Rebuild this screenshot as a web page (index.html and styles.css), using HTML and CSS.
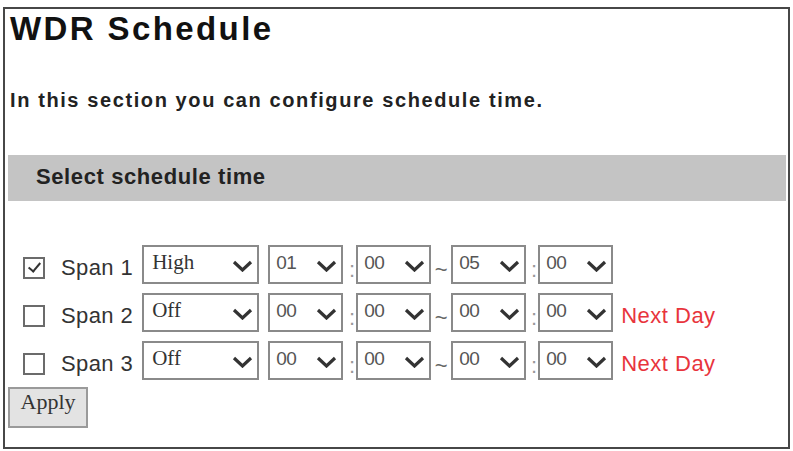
FILE: index.html
```html
<!DOCTYPE html>
<html lang="en">
<head>
  <meta charset="UTF-8">
  <meta name="viewport" content="width=793, initial-scale=1.0">
  <title>WDR Schedule</title>
  <link rel="stylesheet" href="styles.css">
</head>
<body>
  <div class="frame">
    <h1>WDR Schedule</h1>
    <p class="intro">In this section you can configure schedule time.</p>
    <div class="bar">Select schedule time</div>
    <form class="spans" autocomplete="off">
      <div class="span-row">
        <input type="checkbox" checked>
        <span class="span-name">Span 1</span>
        <span class="pick mode">
          <select><option>High</option><option>Low</option><option>Off</option></select>
          <svg class="chev" viewBox="0 0 21 12"><path d="M2 2l8.5 8 8.5-8"/></svg>
        </span>
        <span class="pick clock">
          <select><option>01</option></select>
          <svg class="chev" viewBox="0 0 21 12"><path d="M2 2l8.5 8 8.5-8"/></svg>
        </span>
        <span class="sep">:</span>
        <span class="pick clock">
          <select><option>00</option></select>
          <svg class="chev" viewBox="0 0 21 12"><path d="M2 2l8.5 8 8.5-8"/></svg>
        </span>
        <span class="sep tilde">~</span>
        <span class="pick clock">
          <select><option>05</option></select>
          <svg class="chev" viewBox="0 0 21 12"><path d="M2 2l8.5 8 8.5-8"/></svg>
        </span>
        <span class="sep end">:</span>
        <span class="pick clock">
          <select><option>00</option></select>
          <svg class="chev" viewBox="0 0 21 12"><path d="M2 2l8.5 8 8.5-8"/></svg>
        </span>
      </div>
      <div class="span-row">
        <input type="checkbox">
        <span class="span-name">Span 2</span>
        <span class="pick mode">
          <select><option>Off</option><option>Low</option><option>High</option></select>
          <svg class="chev" viewBox="0 0 21 12"><path d="M2 2l8.5 8 8.5-8"/></svg>
        </span>
        <span class="pick clock">
          <select><option>00</option></select>
          <svg class="chev" viewBox="0 0 21 12"><path d="M2 2l8.5 8 8.5-8"/></svg>
        </span>
        <span class="sep">:</span>
        <span class="pick clock">
          <select><option>00</option></select>
          <svg class="chev" viewBox="0 0 21 12"><path d="M2 2l8.5 8 8.5-8"/></svg>
        </span>
        <span class="sep tilde">~</span>
        <span class="pick clock">
          <select><option>00</option></select>
          <svg class="chev" viewBox="0 0 21 12"><path d="M2 2l8.5 8 8.5-8"/></svg>
        </span>
        <span class="sep end">:</span>
        <span class="pick clock">
          <select><option>00</option></select>
          <svg class="chev" viewBox="0 0 21 12"><path d="M2 2l8.5 8 8.5-8"/></svg>
        </span>
        <span class="next">Next Day</span>
      </div>
      <div class="span-row">
        <input type="checkbox">
        <span class="span-name">Span 3</span>
        <span class="pick mode">
          <select><option>Off</option><option>Low</option><option>High</option></select>
          <svg class="chev" viewBox="0 0 21 12"><path d="M2 2l8.5 8 8.5-8"/></svg>
        </span>
        <span class="pick clock">
          <select><option>00</option></select>
          <svg class="chev" viewBox="0 0 21 12"><path d="M2 2l8.5 8 8.5-8"/></svg>
        </span>
        <span class="sep">:</span>
        <span class="pick clock">
          <select><option>00</option></select>
          <svg class="chev" viewBox="0 0 21 12"><path d="M2 2l8.5 8 8.5-8"/></svg>
        </span>
        <span class="sep tilde">~</span>
        <span class="pick clock">
          <select><option>00</option></select>
          <svg class="chev" viewBox="0 0 21 12"><path d="M2 2l8.5 8 8.5-8"/></svg>
        </span>
        <span class="sep end">:</span>
        <span class="pick clock">
          <select><option>00</option></select>
          <svg class="chev" viewBox="0 0 21 12"><path d="M2 2l8.5 8 8.5-8"/></svg>
        </span>
        <span class="next">Next Day</span>
      </div>
      <button type="button" class="apply">Apply</button>
    </form>
  </div>
</body>
</html>
```

FILE: styles.css
```css
body { margin: 0; background: #fff; color: #222; font-family: "Liberation Sans", Arial, sans-serif; }

.frame {
  margin: 7px 3px 0;
  height: 442px;
  border: 2px solid #474747;
  box-sizing: border-box;
}

h1 {
  margin: 2px 0 0 5px;
  font-size: 33px;
  line-height: 36px;
  font-weight: bold;
  letter-spacing: 2.4px;
  color: #111;
}

.intro {
  margin: 42px 0 0 5px;
  font-size: 20px;
  line-height: 22px;
  font-weight: bold;
  letter-spacing: 1.6px;
  color: #222;
}

.bar {
  margin: 44px 2px 0 3px;
  height: 46px;
  padding-left: 28px;
  line-height: 44px;
  background: #c4c4c4;
  font-size: 22px;
  font-weight: bold;
  letter-spacing: 0.6px;
  color: #222;
}

.spans { margin-top: 44px; }

.span-row {
  display: flex;
  align-items: center;
  height: 39px;
  padding-left: 18px;
}
.span-row + .span-row { margin-top: 9px; }

input[type="checkbox"] {
  -webkit-appearance: none;
  appearance: none;
  position: relative;
  flex-shrink: 0;
  width: 22px;
  height: 22px;
  margin: 7px 16px 0 0;
  border: 2px solid #6b6b6b;
  background: #fff;
  box-sizing: border-box;
}
input[type="checkbox"]:checked::after {
  content: "";
  position: absolute;
  left: 6px;
  top: 1px;
  width: 5px;
  height: 10px;
  border: solid #333;
  border-width: 0 2.5px 2.5px 0;
  transform: rotate(40deg);
}

.span-name {
  margin: 6px 9px 0 0;
  font-size: 22px;
  line-height: 26px;
  letter-spacing: 0.4px;
  color: #333;
}

.pick {
  position: relative;
  display: block;
  flex-shrink: 0;
  height: 39px;
}
.pick.mode { width: 117px; margin-right: 9px; }
.pick.clock { width: 75px; }

.pick select {
  -webkit-appearance: none;
  appearance: none;
  display: block;
  width: 100%;
  height: 39px;
  margin: 0;
  padding: 0 0 5px 8px;
  border: 2px solid #8a8a8a;
  border-radius: 0;
  background: #fff;
  box-sizing: border-box;
  font-family: "Liberation Serif", "Times New Roman", serif;
  font-size: 21px;
  color: #333;
}
.pick.clock select {
  padding-left: 6px;
  font-family: "Liberation Sans", Arial, sans-serif;
  font-size: 19px;
  letter-spacing: -0.5px;
  color: #555;
}

.chev {
  position: absolute;
  right: 6px;
  top: 50%;
  width: 21px;
  height: 12px;
  margin-top: -4.5px;
  fill: none;
  stroke: #333;
  stroke-width: 3.2;
  pointer-events: none;
}

.sep {
  flex-shrink: 0;
  width: 13px;
  margin-top: 10px;
  padding-right: 1px;
  box-sizing: border-box;
  text-align: right;
  font-size: 22px;
  line-height: 26px;
  color: #999;
}
.sep.tilde { width: 20px; padding: 0; text-align: center; color: #666; }
.sep.end { width: 12px; }

.next {
  margin: 6px 0 0 8px;
  font-size: 22px;
  line-height: 26px;
  letter-spacing: 0.5px;
  color: #e8343c;
}

.apply {
  display: block;
  width: 80px;
  height: 41px;
  margin: 7px 0 0 3px;
  padding: 0 0 14px;
  border: 2px solid #9a9a9a;
  border-radius: 0;
  background: #e3e3e3;
  font-family: "Liberation Serif", "Times New Roman", serif;
  font-size: 22px;
  color: #333;
}
```
